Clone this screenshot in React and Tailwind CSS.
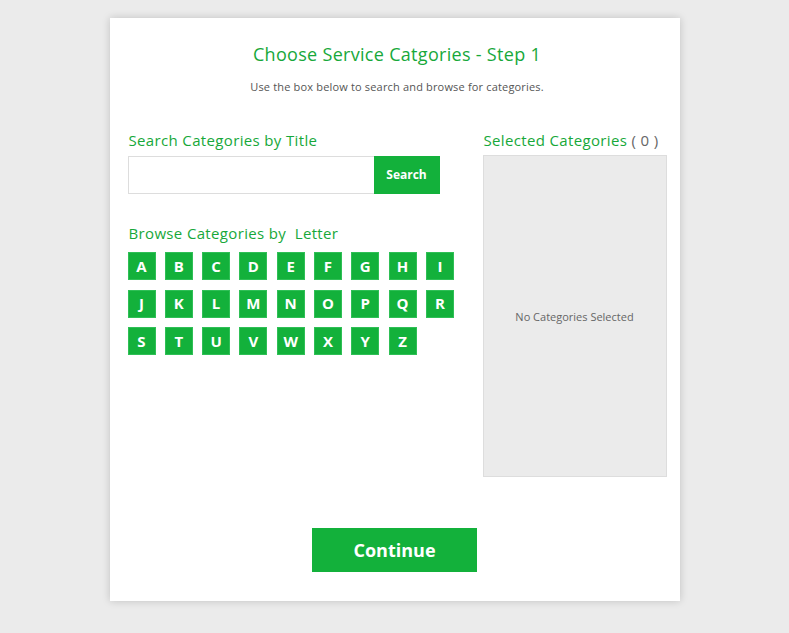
import React from 'react';

const letters = "ABCDEFGHIJKLMNOPQRSTUVWXYZ".split('');

const App = () => {
  return (
    <div className="min-h-screen bg-[#ebebeb] pt-[18px] pb-[32px]" style={{ fontFamily: '"Open Sans", "Liberation Sans", sans-serif' }}>
      <div className="mx-auto w-[570px] bg-white shadow-[0_0_8px_rgba(0,0,0,0.18)] pt-[24px] pb-[29px] pl-[18px] pr-[13px]">
        <h1 className="text-center text-[18px] leading-[24px] text-[#17a83a] tracking-[0.3px]">Choose Service Catgories - Step 1</h1>
        <p className="mt-[14px] text-center text-[11px] leading-[14px] text-[#555] tracking-[0.17px]">Use the box below to search and browse for categories.</p>

        <div className="mt-[36px] flex">
          <div className="w-[327px]">
            <h2 className="pl-[1px] text-[15px] leading-[20px] text-[#17a83a] tracking-[0.35px]">Search Categories by Title</h2>
            <div className="mt-[6px] flex h-[38px] w-[312px]">
              <input type="text" className="h-full flex-1 border border-[#dddddd] border-r-0 px-2 text-sm outline-none" />
              <button className="h-full w-[66px] bg-[#13b13b] text-[12px] font-bold text-white">Search</button>
            </div>

            <h2 className="mt-[29px] pl-[1px] text-[15px] leading-[20px] text-[#17a83a] tracking-[0.35px]">Browse Categories by&nbsp; Letter</h2>
            <div className="mt-[9px] grid grid-cols-[repeat(9,28px)] gap-x-[9.3px] gap-y-[9.5px]">
              {letters.map(l => (
                <button key={l} className="flex h-[28px] w-[28px] items-center justify-center border border-[#2fbf56] bg-[#13b13b] text-[15px] font-bold text-white">
                  {l}
                </button>
              ))}
            </div>
          </div>

          <div className="ml-auto w-[184px]">
            <h2 className="pl-[1px] text-[15px] leading-[20px] text-[#17a83a] tracking-[0.35px]">Selected Categories <span className="text-[#666]">( 0 )</span></h2>
            <div className="mt-[5px] h-[322px] border border-[#dddddd] bg-[#ebebeb] pt-[154px] text-center text-[11px] leading-[14px] text-[#666]">
              No Categories Selected
            </div>
          </div>
        </div>

        <div className="mt-[51px] flex justify-center pr-[5px]">
          <button className="h-[44px] w-[165px] bg-[#13b13b] text-[18px] font-bold text-white">Continue</button>
        </div>
      </div>
    </div>
  );
};

export default App;
